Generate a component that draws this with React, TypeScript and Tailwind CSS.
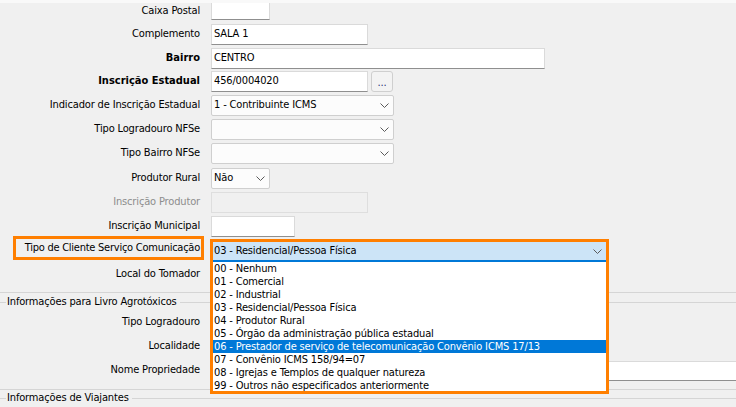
import React from "react";

const Chevron = () => (
  <svg width="9" height="5" viewBox="0 0 9 5" className="shrink-0">
    <polyline points="0.5,0.5 4.5,4.5 8.5,0.5" fill="none" stroke="#5a5a5a" strokeWidth="1" />
  </svg>
);

type RowProps = {
  h: string;
  label: string;
  bold?: boolean;
  disabled?: boolean;
  lh?: string;
  children?: React.ReactNode;
};

const Row = ({ h, label, bold, disabled, lh, children }: RowProps) => (
  <div className={`flex items-start ${h}`}>
    <div
      className={`w-[200px] shrink-0 flex items-center justify-end whitespace-nowrap ${lh ?? "h-[21px]"} ${
        bold ? "font-bold tracking-normal" : ""
      } ${disabled ? "text-[#8d8d8d]" : "text-black"}`}
    >
      {label}
    </div>
    <div className="w-[11px] shrink-0" />
    {children}
  </div>
);

const Input = ({ w, text, h }: { w: string; text?: string; h?: string }) => (
  <div
    className={`${h ?? "h-[21px]"} ${w} shrink-0 bg-white border border-[#dadada] border-b-[#8f8f8f] pl-[2px] flex items-center whitespace-nowrap overflow-hidden`}
  >
    {text}
  </div>
);

const Select = ({ w, text }: { w: string; text?: string }) => (
  <div
    className={`h-[21px] ${w} shrink-0 bg-[#fcfcfc] border border-[#cfcfcf] rounded-[2px] flex items-center justify-between pl-[2px] pr-[4px] whitespace-nowrap`}
  >
    <span>{text}</span>
    <Chevron />
  </div>
);

const GroupHeader = ({ title, h }: { title: string; h: string }) => (
  <div className={`flex items-center ${h}`}>
    <div className="w-[6px] h-px bg-[#d5d5d5] shrink-0" />
    <span className="px-[1px] whitespace-nowrap">{title}</span>
    <div className="flex-1 h-px bg-[#d5d5d5] ml-[2px]" />
  </div>
);

const items = [
  "00 - Nenhum",
  "01 - Comercial",
  "02 - Industrial",
  "03 - Residencial/Pessoa Física",
  "04 - Produtor Rural",
  "05 - Órgão da administração pública estadual",
  "06 - Prestador de serviço de telecomunicação Convênio ICMS 17/13",
  "07 - Convênio ICMS 158/94=07",
  "08 - Igrejas e Templos de qualquer natureza",
  "99 - Outros não especificados anteriormente",
];

export default function App() {
  return (
    <div className="relative w-[736px] h-[407px] overflow-hidden bg-[#f0f0f0] text-[11px] tracking-[-0.15px] text-black font-['DejaVu_Sans_Condensed','DejaVu_Sans',sans-serif]">
      <div className="h-[3px] bg-[#f9f9f9]" />

      {/* Caixa Postal */}
      <div className="flex items-start h-[21px]">
        <div className="w-[200px] shrink-0 h-[17px] flex items-center justify-end whitespace-nowrap">Caixa Postal</div>
        <div className="w-[11px] shrink-0" />
        <div className="h-[17px] w-[59px] bg-white border-x border-b border-[#dadada] border-b-[#8f8f8f]" />
      </div>

      <Row h="h-[24px]" label="Complemento">
        <Input w="w-[157px]" text="SALA 1" />
      </Row>
      <Row h="h-[23px]" label="Bairro" bold>
        <Input w="w-[334px]" text="CENTRO" />
      </Row>
      <Row h="h-[24px]" label="Inscrição Estadual" bold>
        <Input w="w-[157px]" text="456/0004020" />
        <div className="ml-[3px] h-[21px] w-[22px] rounded-[3px] border border-[#cfcfcf] bg-[#f3f3f3] flex items-end justify-center pb-[3px] leading-none text-[#2a2a7a]">
          ...
        </div>
      </Row>
      <Row h="h-[24px]" label="Indicador de Inscrição Estadual">
        <Select w="w-[183px]" text="1 - Contribuinte ICMS" />
      </Row>
      <Row h="h-[24px]" label="Tipo Logradouro NFSe">
        <Select w="w-[183px]" />
      </Row>
      <Row h="h-[25px]" label="Tipo Bairro NFSe">
        <Select w="w-[183px]" />
      </Row>
      <Row h="h-[24px]" label="Produtor Rural">
        <Select w="w-[59px]" text="Não" />
      </Row>
      <Row h="h-[24px]" label="Inscrição Produtor" disabled>
        <div className="h-[21px] w-[157px] border border-[#dedede] bg-[#f0f0f0]" />
      </Row>
      <Row h="h-[20px]" label="Inscrição Municipal">
        <Input w="w-[84px]" />
      </Row>

      {/* Tipo de Cliente Serviço Comunicação */}
      <div className="flex items-start h-[28px]">
        <div className="ml-[13px] w-[191px] h-[24px] shrink-0 border-[3px] border-[#ff7f00] flex items-center justify-end pr-[1px] whitespace-nowrap tracking-[-0.25px]">
          Tipo de Cliente Serviço Comunicação
        </div>
        <div className="w-[7px] shrink-0" />
        <div className="relative h-[24px] w-[397px]">
          <div className="absolute left-[-1px] top-[3px] z-10 w-[399px] h-[155px] overflow-hidden border-[3px] border-[#ff7f00] bg-white flex flex-col">
            <div className="h-[18px] shrink-0 bg-[#cce4f7] flex items-center justify-between pl-[1px] pr-[4px] whitespace-nowrap">
              <span>03 - Residencial/Pessoa Física</span>
              <Chevron />
            </div>
            <div className="h-[2px] shrink-0 bg-[#0078d7]" />
            <div className="flex flex-col">
              {items.map((t) => (
                <div
                  key={t}
                  className={`h-[13px] shrink-0 leading-[13px] pl-[1px] whitespace-nowrap ${
                    t.startsWith("06") ? "bg-[#0078d7] text-white" : "text-black"
                  }`}
                >
                  {t}
                </div>
              ))}
            </div>
          </div>
        </div>
      </div>

      <Row h="h-[24px]" label="Local do Tomador">
        <Select w="w-[183px]" />
      </Row>

      <div className="h-[4px]" />
      <div className="h-px bg-[#d5d5d5]" />
      <GroupHeader title="Informações para Livro Agrotóxicos" h="h-[19px]" />

      <Row h="h-[24px]" label="Tipo Logradouro">
        <Select w="w-[183px]" />
      </Row>
      <Row h="h-[24px]" label="Localidade">
        <Input w="w-[334px]" />
      </Row>
      <Row h="h-[24px]" label="Nome Propriedade">
        <div className="mt-[1px]">
          <Input w="w-[540px]" h="h-[20px]" />
        </div>
      </Row>

      <div className="h-[5px]" />
      <div className="h-px bg-[#d5d5d5]" />
      <GroupHeader title="Informações de Viajantes" h="h-[17px]" />
    </div>
  );
}
